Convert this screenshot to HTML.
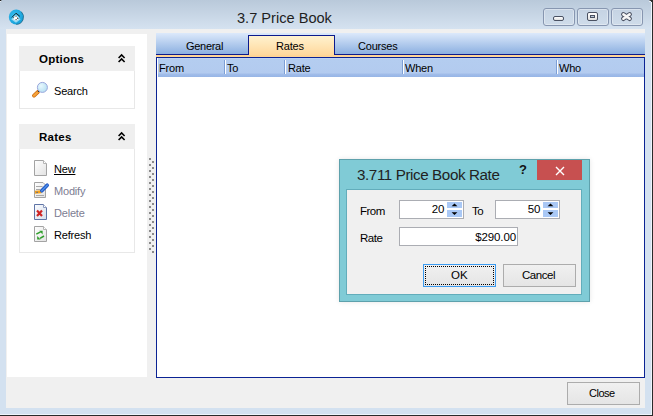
<!DOCTYPE html>
<html><head><meta charset="utf-8">
<style>
*{margin:0;padding:0;box-sizing:border-box}
html,body{width:653px;height:416px;overflow:hidden;background:#d3e1f0;font-family:"Liberation Sans",sans-serif}
.a{position:absolute}
#title{left:0;top:0;width:651px;height:29px;background:linear-gradient(#b9c9da,#d5e2f0)}
#rdark{left:652px;top:0;width:1px;height:416px;background:#2a2a2a}
#rhl{left:651px;top:0;width:1px;height:415px;background:#eef4fb}
#bhl{left:0;top:414px;width:652px;height:1px;background:#eef4fb}
#bdark{left:0;top:415px;width:653px;height:1px;background:#2a2a2a}
#client{left:6px;top:29px;width:639px;height:379px;background:#f0f0f0}
#leftpanel{left:7px;top:34px;width:140px;height:343px;background:#fff}
.box{border:1px solid #e8e8e8;background:#fff}
.boxh{background:#efefef;height:25px}
.bt{font-size:11.5px;font-weight:bold;color:#000;white-space:nowrap;letter-spacing:0.25px}
.t11{font-size:11px;color:#000;white-space:nowrap;letter-spacing:-0.2px}
.tbtn{width:32px;height:18px;border:1px solid #8796b0;border-radius:3px;background:linear-gradient(#c5d3e3,#cfdcea);box-shadow:inset 0 0 0 1px rgba(255,255,255,.35)}
.dot{width:2px;height:2px;background:#8a8a8a}
</style></head><body>
<div id="title" class="a"></div>
<div id="rhl" class="a"></div><div id="bhl" class="a"></div>
<div id="rdark" class="a"></div>
<div id="bdark" class="a"></div>
<div class="a" style="left:649px;top:0;width:1px;height:1px;background:#8a939c"></div><div class="a" style="left:650px;top:0;width:2px;height:1px;background:#3a3a3a"></div><div class="a" style="left:651px;top:1px;width:1px;height:1px;background:#3a3a3a"></div><div class="a" style="left:649px;top:1px;width:2px;height:1px;background:#e8eef5"></div><div class="a" style="left:651px;top:0;width:1px;height:1px;background:#2a2a2a"></div>
<div class="a" style="left:0;top:0;width:1px;height:1px;background:#222"></div><div class="a" style="left:1px;top:0;width:1px;height:1px;background:#8f969e"></div><div class="a" style="left:0;top:1px;width:1px;height:1px;background:#e6ecf2"></div>

<!-- app icon -->
<svg class="a" style="left:8px;top:9px" width="17" height="17" viewBox="0 0 17 17">
 <defs><radialGradient id="ig" cx=".4" cy=".4" r=".65"><stop offset="0" stop-color="#3cc0f0"/><stop offset="1" stop-color="#139ed8"/></radialGradient></defs>
 <circle cx="8.2" cy="8" r="7.4" fill="url(#ig)"/>
 <path d="M13.4 2.8 A7.4 7.4 0 0 1 8.2 15.4" fill="none" stroke="#1f5d7a" stroke-width="1" opacity=".75"/>
 <path d="M3.2 10.2 L8 6.5 L12.6 10.2 L8 13.8 Z" fill="#bfe9f8" opacity=".75"/>
 <path d="M5.2 8.2 L8 6 L10.6 8.2 L10.2 10.4 L8 11.4 L5.6 10.4 Z" fill="#fff"/>
 <path d="M3.8 8.4 L8 4.2 L11.9 7.4" fill="none" stroke="#1a1a1a" stroke-width="0.9"/>
 <path d="M5.3 8.8 L6.2 8.2 M7.5 7.2 L8.6 7.2 M9.6 8.6 L9.9 10 M7.6 10.6 L8.6 10.6" stroke="#1a1a1a" stroke-width="1"/>
</svg>
<div class="a" style="left:237px;top:10px;font-size:14.6px;color:#1e1e1e;white-space:nowrap">3.7 Price Book</div>

<!-- title buttons -->
<div class="a tbtn" style="left:543px;top:8px"></div>
<div class="a tbtn" style="left:577px;top:8px"></div>
<div class="a tbtn" style="left:611px;top:8px"></div>
<div class="a" style="left:553px;top:16px;width:11px;height:5px;border:1px solid #4a5162;border-radius:2px;background:linear-gradient(#fff,#e0e0e0)"></div>
<div class="a" style="left:587px;top:12px;width:11px;height:9px;border:1px solid #4a5162;border-radius:2px;background:linear-gradient(#fff,#e0e0e0)"></div>
<div class="a" style="left:590px;top:15px;width:5px;height:3px;border:1px solid #4a5162;background:#b9c9da"></div>
<svg class="a" style="left:620px;top:11px" width="13" height="11" viewBox="0 0 13 11">
 <path d="M3.4 3.4 L9.6 7.7 M9.6 3.4 L3.4 7.7" stroke="#4a5162" stroke-width="4.6" stroke-linecap="round"/>
 <path d="M3.4 3.4 L9.6 7.7 M9.6 3.4 L3.4 7.7" stroke="#f6f6f6" stroke-width="2.6" stroke-linecap="round"/>
</svg>

<div id="client" class="a"></div>
<div id="leftpanel" class="a"></div>

<!-- Options box -->
<div class="a box" style="left:19px;top:46px;width:116px;height:63px"></div>
<div class="a boxh" style="left:19px;top:46px;width:116px"></div>
<div class="a bt" style="left:39px;top:53px">Options</div>
<svg class="a" style="left:117px;top:53px" width="10" height="10" viewBox="0 0 10 10">
 <path d="M1.6 5 L4.6 2 L7.6 5 M1.6 9 L4.6 6 L7.6 9" fill="none" stroke="#000" stroke-width="1.6"/>
</svg>
<svg class="a" style="left:30px;top:80px" width="20" height="20" viewBox="0 0 20 20">
 <defs><radialGradient id="lg" cx=".35" cy=".35" r=".7"><stop offset="0" stop-color="#e8f8fd"/><stop offset="1" stop-color="#b6e0f2"/></radialGradient></defs>
 <line x1="4" y1="15.6" x2="8" y2="11.8" stroke="#c9680e" stroke-width="3.8" stroke-linecap="round"/>
 <line x1="4" y1="15.6" x2="8" y2="11.8" stroke="#f7a33a" stroke-width="2.4" stroke-linecap="round"/>
 <line x1="8" y1="11.8" x2="9.2" y2="10.6" stroke="#333" stroke-width="1.6"/>
 <circle cx="12.4" cy="7.4" r="5" fill="url(#lg)" stroke="#9aa6dc" stroke-width="1"/>
</svg>
<div class="a t11" style="left:54px;top:85px">Search</div>

<!-- Rates box -->
<div class="a box" style="left:19px;top:124px;width:116px;height:129px"></div>
<div class="a boxh" style="left:19px;top:124px;width:116px"></div>
<div class="a bt" style="left:39px;top:131px">Rates</div>
<svg class="a" style="left:117px;top:131px" width="10" height="10" viewBox="0 0 10 10">
 <path d="M1.6 5 L4.6 2 L7.6 5 M1.6 9 L4.6 6 L7.6 9" fill="none" stroke="#000" stroke-width="1.6"/>
</svg>
<!-- icons -->
<svg class="a" style="left:32px;top:158px" width="18" height="20" viewBox="0 0 18 20">
 <defs><linearGradient id="pg" x1="0" y1="0" x2="1" y2="1"><stop offset="0" stop-color="#fff"/><stop offset="1" stop-color="#e2e2e2"/></linearGradient></defs>
 <path d="M2.5 2.5 H11.5 L14.5 5.5 V17.5 H2.5 Z" fill="url(#pg)" stroke="#a3a3a3"/>
 <path d="M11.5 2.5 V5.5 H14.5" fill="#fff" stroke="#b5b5b5"/>
</svg>
<div class="a t11" style="left:54px;top:163px;text-decoration:underline">New</div>
<svg class="a" style="left:32px;top:180px" width="18" height="20" viewBox="0 0 18 20">
 <path d="M2.5 2.5 H11 L13.5 5 V17.5 H2.5 Z" fill="url(#pg)" stroke="#a3a3a3"/>
 <path d="M4 6.5 H10.5 M4 9.5 H8.5 M4 15.5 H12" stroke="#a8a8a8"/>
 <path d="M3 12.2 L9.5 11.8" stroke="#f4a11c" stroke-width="3"/>
 <path d="M4.2 12.3 H6" stroke="#5a6a8a" stroke-width="1"/>
 <path d="M9.8 10.8 L15.2 5.2" stroke="#1e56c4" stroke-width="3.6" stroke-linecap="round"/>
 <path d="M9.8 10.8 L15.2 5.2" stroke="#4d8ee8" stroke-width="1.6" stroke-linecap="round"/>
</svg>
<div class="a t11" style="left:54px;top:185px;color:#7d7d92">Modify</div>
<svg class="a" style="left:32px;top:202px" width="18" height="20" viewBox="0 0 18 20">
 <defs><linearGradient id="pb" x1="0" y1="0" x2="1" y2="1"><stop offset="0" stop-color="#fbfcff"/><stop offset="1" stop-color="#d6deea"/></linearGradient></defs>
 <path d="M2.5 2.5 H11.5 L14.5 5.5 V17.5 H2.5 Z" fill="url(#pb)" stroke="#5f74a6"/>
 <path d="M11.5 2.5 V5.5 H14.5" fill="#fff" stroke="#8d9cc0"/>
 <path d="M5 8.6 L10 14 M10 8.6 L5 14" stroke="#cf2424" stroke-width="2.2"/>
</svg>
<div class="a t11" style="left:54px;top:207px;color:#7d7d92">Delete</div>
<svg class="a" style="left:32px;top:224px" width="18" height="20" viewBox="0 0 18 20">
 <path d="M2.5 2.5 H11.5 L14.5 5.5 V17.5 H2.5 Z" fill="url(#pg)" stroke="#a3a3a3"/>
 <path d="M11.5 2.5 V5.5 H14.5" fill="#fff" stroke="#b5b5b5"/>
 <path d="M4.3 10.2 L8.6 7.8" stroke="#2e9e2a" stroke-width="1.5"/>
 <path d="M7.4 6.8 L10.6 6.8 L10.6 10.4 Z" fill="#2e9e2a"/>
 <path d="M8 14.4 L12 12" stroke="#2e9e2a" stroke-width="1.5"/>
 <path d="M5.2 12 L5.2 15.6 L8.6 15.6 Z" fill="#2e9e2a"/>
</svg>
<div class="a t11" style="left:54px;top:229px">Refresh</div>

<!-- splitter dots -->
<div class="a dot" style="left:149px;top:158px"></div><div class="a dot" style="left:152px;top:161px"></div><div class="a dot" style="left:149px;top:164px"></div><div class="a dot" style="left:152px;top:167px"></div><div class="a dot" style="left:149px;top:170px"></div><div class="a dot" style="left:152px;top:173px"></div><div class="a dot" style="left:149px;top:176px"></div><div class="a dot" style="left:152px;top:179px"></div><div class="a dot" style="left:149px;top:182px"></div><div class="a dot" style="left:152px;top:185px"></div><div class="a dot" style="left:149px;top:188px"></div><div class="a dot" style="left:152px;top:191px"></div><div class="a dot" style="left:149px;top:194px"></div><div class="a dot" style="left:152px;top:197px"></div><div class="a dot" style="left:149px;top:200px"></div><div class="a dot" style="left:152px;top:203px"></div><div class="a dot" style="left:149px;top:206px"></div><div class="a dot" style="left:152px;top:209px"></div><div class="a dot" style="left:149px;top:212px"></div><div class="a dot" style="left:152px;top:215px"></div><div class="a dot" style="left:149px;top:218px"></div><div class="a dot" style="left:152px;top:221px"></div><div class="a dot" style="left:149px;top:224px"></div><div class="a dot" style="left:152px;top:227px"></div><div class="a dot" style="left:149px;top:230px"></div><div class="a dot" style="left:152px;top:233px"></div><div class="a dot" style="left:149px;top:236px"></div><div class="a dot" style="left:152px;top:239px"></div><div class="a dot" style="left:149px;top:242px"></div><div class="a dot" style="left:152px;top:245px"></div><div class="a dot" style="left:149px;top:248px"></div><div class="a dot" style="left:152px;top:251px"></div>

<!-- tab strip -->
<div class="a" style="left:156px;top:33px;width:489px;height:22px;background:linear-gradient(#dce9fb,#88addf)"></div>
<div class="a" style="left:156px;top:54px;width:489px;height:1px;background:#0c1a8c"></div>
<div class="a" style="left:248px;top:35px;width:87px;height:22px;border:1px solid #0c1a8c;border-bottom:none;background:linear-gradient(#fff2cf,#ffd596)"></div>
<div class="a" style="left:156px;top:55px;width:489px;height:2px;background:#ffd596"></div>
<div class="a t11" style="left:186px;top:40px;letter-spacing:-0.3px">General</div>
<div class="a t11" style="left:276px;top:40px">Rates</div>
<div class="a t11" style="left:358px;top:40px">Courses</div>

<!-- grid -->
<div class="a" style="left:156px;top:57px;width:489px;height:321px;border:1px solid #0b2394;background:#fff"></div>
<div class="a" style="left:157px;top:58px;width:487px;height:19px;background:linear-gradient(#c3d7f4 0,#b4cdf0 6%,#b3cbef 78%,#a0bce9 86%,#97b5e6 100%)"></div>
<div class="a" style="left:157px;top:58px;width:1px;height:19px;background:#fff"></div>
<div class="a t11" style="left:159px;top:62px">From</div>
<div class="a t11" style="left:227px;top:62px">To</div>
<div class="a t11" style="left:288px;top:62px">Rate</div>
<div class="a t11" style="left:405px;top:62px">When</div>
<div class="a t11" style="left:559px;top:62px">Who</div>
<div class="a" style="left:224px;top:60px;width:1px;height:14px;background:#7d9fd6"></div><div class="a" style="left:225px;top:60px;width:1px;height:14px;background:#fff"></div><div class="a" style="left:284px;top:60px;width:1px;height:14px;background:#7d9fd6"></div><div class="a" style="left:285px;top:60px;width:1px;height:14px;background:#fff"></div><div class="a" style="left:402px;top:60px;width:1px;height:14px;background:#7d9fd6"></div><div class="a" style="left:403px;top:60px;width:1px;height:14px;background:#fff"></div><div class="a" style="left:556px;top:60px;width:1px;height:14px;background:#7d9fd6"></div><div class="a" style="left:557px;top:60px;width:1px;height:14px;background:#fff"></div>

<!-- bottom close -->
<div class="a" style="left:567px;top:382px;width:73px;height:23px;border:1px solid #acacac;background:linear-gradient(#f0f0f0,#e5e5e5)"></div>
<div class="a t11" style="left:589px;top:387px;font-size:11px;letter-spacing:-0.5px">Close</div>

<!-- dialog -->
<div class="a" style="left:339px;top:159px;width:251px;height:143px;background:#80cbd6;border:1px solid #5ea1ac;box-shadow:0 0 5px rgba(0,0,0,.1)"></div>
<div class="a" style="left:357px;top:166px;font-size:15.2px;letter-spacing:-0.4px;color:#222;white-space:nowrap">3.711 Price Book Rate</div>
<div class="a" style="left:519px;top:162px;font-size:13px;font-weight:bold;color:#111">?</div>
<div class="a" style="left:537px;top:160px;width:45px;height:20px;background:#c75050"></div>
<svg class="a" style="left:555px;top:166px" width="10" height="10" viewBox="0 0 10 10">
 <path d="M1 1 L9 9 M9 1 L1 9" stroke="#fff" stroke-width="1.4"/>
</svg>
<div class="a" style="left:346px;top:189px;width:236px;height:106px;background:#f0f0f0;border:1px solid #62adbb"></div>
<div class="a" style="left:360px;top:205px;font-size:11.5px;letter-spacing:-0.5px;color:#000">From</div>
<div class="a" style="left:399px;top:200px;width:65px;height:19px;background:#fff;border:1px solid #abadb3"></div>
<div class="a" style="left:360px;top:232px;font-size:11.5px;letter-spacing:-0.5px;color:#000">Rate</div>
<div class="a" style="left:472px;top:205px;font-size:11.5px;letter-spacing:-0.5px;color:#000">To</div>
<div class="a" style="left:495px;top:200px;width:65px;height:19px;background:#fff;border:1px solid #abadb3"></div>
<div class="a" style="left:399px;top:227px;width:119px;height:19px;background:#fff;border:1px solid #abadb3"></div>
<div class="a" style="left:419px;top:203px;width:25px;text-align:right;font-size:11.5px;letter-spacing:-0.3px;color:#000">20</div>
<div class="a" style="left:515px;top:203px;width:25px;text-align:right;font-size:11.5px;letter-spacing:-0.3px;color:#000">50</div>
<div class="a" style="left:455px;top:231px;width:61px;text-align:right;font-size:11.5px;letter-spacing:-0.1px;color:#000">$290.00</div>
<div class="a" style="left:447px;top:202px;width:15px;height:6px;background:#a9c8f5"></div><div class="a" style="left:447px;top:210px;width:15px;height:7px;background:#a9c8f5"></div><svg class="a" style="left:447px;top:202px" width="15" height="15" viewBox="0 0 15 15"><path d="M4.6 4.3 L7.5 1.4 L10.4 4.3 Z M4.6 10.2 L7.5 13.1 L10.4 10.2 Z" fill="#000"/></svg><div class="a" style="left:543px;top:202px;width:15px;height:6px;background:#a9c8f5"></div><div class="a" style="left:543px;top:210px;width:15px;height:7px;background:#a9c8f5"></div><svg class="a" style="left:543px;top:202px" width="15" height="15" viewBox="0 0 15 15"><path d="M4.6 4.3 L7.5 1.4 L10.4 4.3 Z M4.6 10.2 L7.5 13.1 L10.4 10.2 Z" fill="#000"/></svg>
<div class="a" style="left:423px;top:264px;width:73px;height:23px;border:1px solid #3c9bf0;background:linear-gradient(#f0f0f0,#e5e5e5)"></div>
<div class="a" style="left:425px;top:266px;width:69px;height:19px;border:1px dotted #000"></div>
<div class="a" style="left:451px;top:269px;font-size:11.5px;color:#000">OK</div>
<div class="a" style="left:503px;top:264px;width:73px;height:23px;border:1px solid #acacac;background:linear-gradient(#f0f0f0,#e5e5e5)"></div>
<div class="a" style="left:522px;top:269px;font-size:11.5px;letter-spacing:-0.45px;color:#000">Cancel</div>

</body></html>
